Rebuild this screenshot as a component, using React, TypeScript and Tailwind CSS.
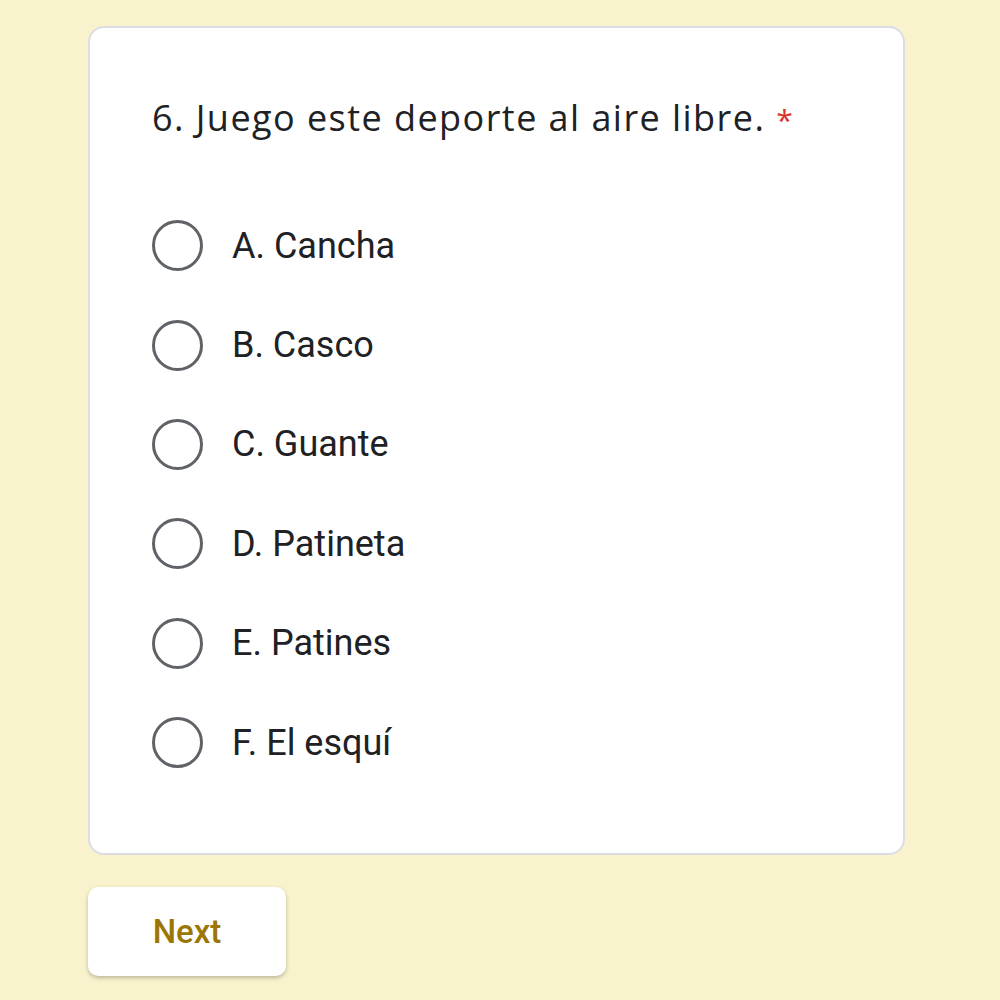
import { useState } from "react";

const options = ["A. Cancha", "B. Casco", "C. Guante", "D. Patineta", "E. Patines", "F. El esquí"];

export default function App() {
  const [picked, setPicked] = useState<string | null>(null);

  return (
    <div className="min-h-screen w-full bg-[#f9f3cd] px-[88px] pt-[26px] font-['Roboto',sans-serif]">
      <div className="w-[817px] rounded-[16px] border-2 border-[#dcdce6] bg-white pb-[61px] pl-[62px] pt-[66px]">
        <h2 className="font-['Open_Sans',sans-serif] text-[36px] leading-[48px] tracking-[1.45px] text-[#202124]">
          6. Juego este deporte al aire libre. <span className="text-[30px] leading-none text-[#d93025]">*</span>
        </h2>
        <div className="mt-[54px] flex flex-col">
          {options.map((o) => (
            <label key={o} className="flex h-[99.4px] cursor-pointer items-center gap-[29px]">
              <span
                className="flex h-[51px] w-[51px] items-center justify-center rounded-full border-[3px] border-[#5f6368]"
                onClick={() => setPicked(o)}
              >
                {picked === o && <span className="h-[25px] w-[25px] rounded-full bg-[#5f6368]" />}
              </span>
              <span className="text-[36px] text-[#202124]">{o}</span>
            </label>
          ))}
        </div>
      </div>
      <button className="mt-[32px] flex h-[89px] w-[198px] items-center justify-center rounded-[10px] bg-white text-[33px] font-medium text-[#9c7604] shadow-[0_2px_4px_rgba(0,0,0,0.25)]">
        Next
      </button>
    </div>
  );
}
